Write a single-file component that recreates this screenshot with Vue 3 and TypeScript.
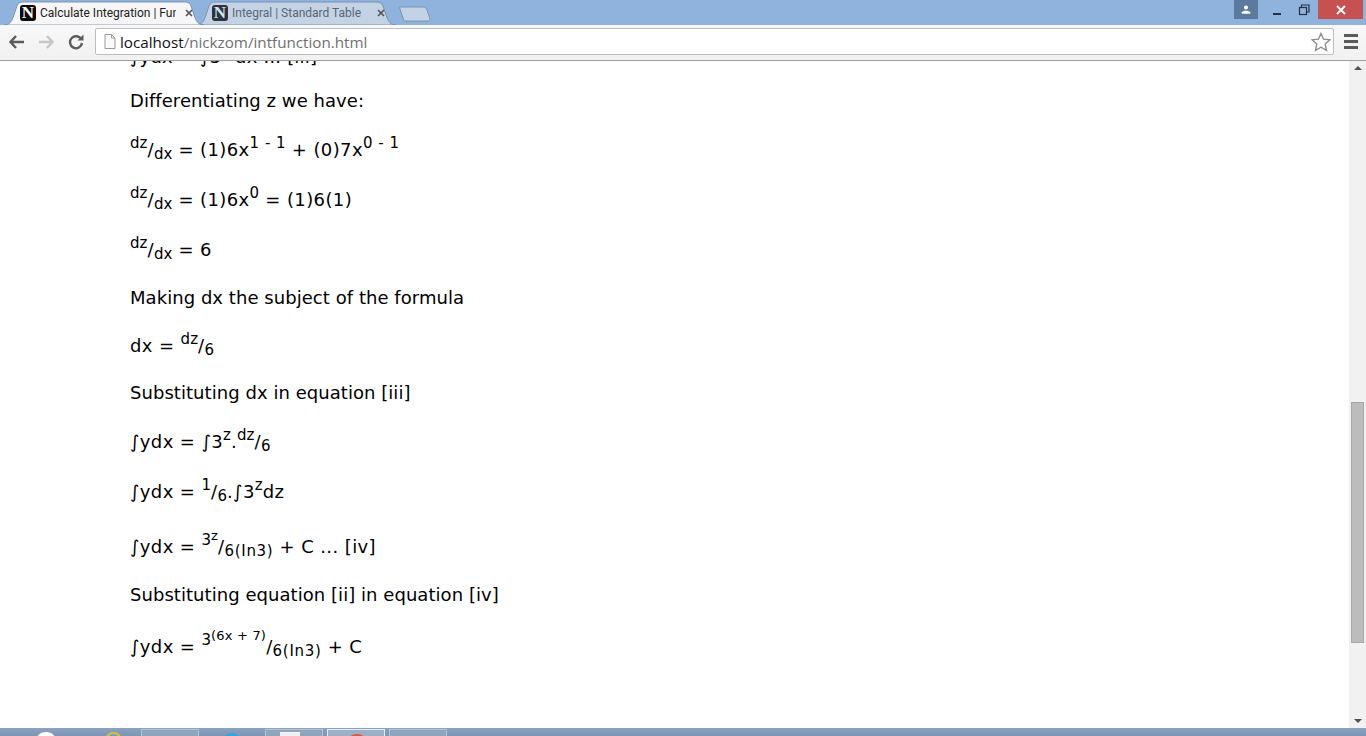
<script setup lang="ts">
const tabs = [
  { title: 'Calculate Integration | Fun', active: true },
  { title: 'Integral | Standard Table', active: false },
]
</script>

<template>
  <div class="window">
    <header class="tabbar">
      <div class="tabs">
        <div v-for="t in tabs" :key="t.title" class="tab" :class="{ active: t.active }">
          <svg class="tab-shape" viewBox="0 0 200 24" preserveAspectRatio="none">
            <path d="M0 24 C6 24 8 20 10 14 L13 5 C14 2 16 1 20 1 L180 1 C184 1 186 2 187 5 L190 14 C192 20 194 24 200 24 Z" />
          </svg>
          <span class="favicon">N</span>
          <span class="tab-title">{{ t.title }}</span>
          <svg class="tab-close" viewBox="0 0 8 8"><path d="M1 1 L7 7 M7 1 L1 7" /></svg>
        </div>
        <svg class="newtab" viewBox="0 0 32 16"><path d="M1 1 L24 1 C26 1 27 2 28 4 L31 13 C31 15 30 15 29 15 L7 15 C5 15 5 14 4 12 L1 3 C0.5 1.5 0.5 1 1 1 Z" /></svg>
      </div>
      <div class="winctl">
        <div class="user">
          <svg viewBox="0 0 12 10" width="10" height="9"><circle cx="6" cy="2.6" r="2.4" /><path d="M1 10 V8.4 C1 7 4 6.4 6 6.4 C8 6.4 11 7 11 8.4 V10 Z" /></svg>
        </div>
        <div class="ctl">
          <svg viewBox="0 0 12 12" width="12" height="12"><rect x="2" y="9" width="8" height="2" /></svg>
        </div>
        <div class="ctl">
          <svg viewBox="0 0 12 12" width="12" height="12" fill="none" stroke="#24303f" stroke-width="1.2"><rect x="1.5" y="3.5" width="7" height="7" /><path d="M3.5 3 V1 H11 V8 H9" /></svg>
        </div>
        <div class="close">
          <svg viewBox="0 0 12 10" width="12" height="10"><path d="M2 1 L10 9 M10 1 L2 9" /></svg>
        </div>
      </div>
    </header>

    <nav class="toolbar">
      <svg class="nav" viewBox="0 0 16 14"><path d="M7 1 L1.5 7 L7 13 M2 7 H15" /></svg>
      <svg class="nav fwd" viewBox="0 0 16 14"><path d="M9 1 L14.5 7 L9 13 M14 7 H1" /></svg>
      <svg class="nav reload" viewBox="0 0 16 16"><path d="M13.4 5.5 A6 6 0 1 0 14 9" /><path class="fill" d="M9.5 6.5 H15.5 V0.5 Z" /></svg>
      <div class="omnibox">
        <svg class="page" viewBox="0 0 12 15"><path d="M1 .5 H7.5 L11 4 V14.5 H1 Z M7.5 .5 V4 H11" /></svg>
        <span class="url"><span class="host">localhost</span>/nickzom/intfunction.html</span>
        <svg class="star" viewBox="0 0 20 20"><path d="M10 1.5 L12.6 7.2 L18.8 7.9 L14.2 12.1 L15.5 18.3 L10 15.2 L4.5 18.3 L5.8 12.1 L1.2 7.9 L7.4 7.2 Z" /></svg>
      </div>
      <div class="menu"><i></i><i></i><i></i></div>
    </nav>

    <div class="viewport">
      <main class="page-content">
        <p class="clipped math">∫ydx = ∫3<sup>z</sup> dx ... [iii]</p>
        <p>Differentiating z we have:</p>
        <p class="math"><sup>dz</sup>/<sub>dx</sub> = (1)6x<sup>1 - 1</sup> + (0)7x<sup>0 - 1</sup></p>
        <p class="math"><sup>dz</sup>/<sub>dx</sub> = (1)6x<sup>0</sup> = (1)6(1)</p>
        <p class="math"><sup>dz</sup>/<sub>dx</sub> = 6</p>
        <p>Making dx the subject of the formula</p>
        <p class="math tight">dx = <sup>dz</sup>/<sub>6</sub></p>
        <p>Substituting dx in equation [iii]</p>
        <p class="math">∫ydx = ∫3<sup>z</sup>.<sup>dz</sup>/<sub>6</sub></p>
        <p class="math">∫ydx = <sup>1</sup>/<sub>6</sub>.∫3<sup>z</sup>dz</p>
        <p class="math">∫ydx = <sup>3<sup>z</sup></sup>/<sub class="log">6(In3)</sub> + C ... [iv]</p>
        <p>Substituting equation [ii] in equation [iv]</p>
        <p class="math last">∫ydx = <sup>3<sup>(6x + 7)</sup></sup>/<sub class="log">6(In3)</sub> + C</p>
      </main>
      <aside class="scrollbar">
        <span class="arrow up"></span>
        <div class="track"><div class="thumb"></div></div>
        <span class="arrow down"></span>
      </aside>
    </div>

    <footer class="taskbar">
      <span class="orb"></span>
      <span class="ie"></span>
      <span class="task"></span>
      <span class="bluedot"></span>
      <span class="task note"><b></b></span>
      <span class="task current"><b></b></span>
      <span class="task"></span>
    </footer>
  </div>
</template>

<style>
html, body { margin: 0; padding: 0; overflow: hidden; }
</style>

<style scoped>
.window { width: 1366px; height: 736px; display: flex; flex-direction: column; overflow: hidden; background: #fff; }

.tabbar { height: 25px; flex: none; display: flex; justify-content: space-between; background: #8fb3dc; }
.tabs { display: flex; align-items: flex-end; padding-left: 4px; }
.tab { position: relative; width: 200px; height: 24px; margin-right: -8px; display: flex; align-items: center; padding: 0 11px 0 16px; box-sizing: border-box; color: #5a6675; font: 12px Roboto, sans-serif; }
.tab-shape { position: absolute; inset: 0; width: 100%; height: 100%; fill: #c3d2e4; stroke: #6f89a8; stroke-width: .8; }
.tab.active { color: #222; z-index: 1; }
.tab.active .tab-shape { fill: #f6f6f6; }
.favicon { position: relative; width: 16px; height: 16px; flex: none; border-radius: 3px; background: #0b0b0b; color: #fff; font: bold 17px/16px "Liberation Serif", serif; text-align: center; }
.tab:not(.active) .favicon { background: #2a3340; color: #d8e0ea; }
.tab-title { position: relative; flex: 1; margin-left: 4px; white-space: nowrap; overflow: hidden; }
.tab-close { position: relative; width: 8px; height: 8px; flex: none; margin-left: 9px; fill: none; stroke: #555; stroke-width: 1.7; }
.tab:not(.active) .tab-close { margin-left: 15px; }
.newtab { width: 32px; height: 16px; margin: 0 0 3px 11px; fill: #c3d2e4; stroke: #6f89a8; stroke-width: .8; }

.winctl { display: flex; height: 19px; padding-right: 3px; }
.user { width: 24px; margin-right: 6px; display: flex; align-items: center; justify-content: center; background: #5b7a9e; fill: #fff; }
.ctl { width: 26px; display: flex; align-items: center; justify-content: center; fill: #24303f; }
.ctl + .ctl { margin-left: 1px; }
.close { width: 45px; margin-left: 1px; display: flex; align-items: center; justify-content: center; background: #c75050; fill: none; stroke: #fff; stroke-width: 2; }

.toolbar { height: 36px; flex: none; box-sizing: border-box; display: flex; align-items: center; padding: 0 8px 2px 9px; border-bottom: 1px solid #a0a0a0; background: linear-gradient(#f8f8f8, #f1f1f1); }
.nav { width: 16px; height: 14px; margin-right: 13px; fill: none; stroke: #5c5c5c; stroke-width: 2.4; flex: none; }
.nav.fwd { stroke: #c6c6c6; margin-right: 14px; }
.nav.reload { height: 16px; margin: 0 8px 0 0; }
.nav.reload .fill { fill: #5c5c5c; stroke: none; }
.omnibox { flex: 1; height: 27px; box-sizing: border-box; margin-left: 3px; display: flex; align-items: center; padding: 0 2px 0 8px; background: #fff; border: 1px solid #bdbdbd; border-radius: 2px; }
.page { width: 12px; height: 15px; fill: #fafafa; stroke: #9a9a9a; flex: none; }
.url { flex: 1; margin-left: 4px; font: 15.2px "Open Sans", sans-serif; color: #6f6f6f; white-space: nowrap; }
.host { color: #111; }
.star { width: 20px; height: 20px; fill: #fff; stroke: #8c8c8c; stroke-width: 1.4; flex: none; }
.menu { width: 14px; margin-left: 10px; display: flex; flex-direction: column; gap: 3px; }
.menu i { height: 3px; background: #5a5a5a; }

.viewport { flex: 1; min-height: 0; display: flex; overflow: hidden; }
.page-content { flex: 1; min-width: 0; padding-left: 130px; overflow: hidden; font: 18px "DejaVu Sans", Verdana, sans-serif; color: #000; letter-spacing: .05px; }
.page-content p { margin: 0 0 26px; line-height: 21.5px; }
.page-content p.math { letter-spacing: .4px; }
.page-content p.clipped { margin: -17px 0 22px; letter-spacing: .2px; }
.page-content p.tight { margin: -2px 0 25px; }
.page-content p.last { margin-top: -3px; }
sup, sub { font-size: 15px; line-height: 13px; letter-spacing: 0; word-spacing: 1px; }
sup { vertical-align: 8px; }
sub { vertical-align: -3px; }
sup sup { font-size: 13px; vertical-align: 5px; word-spacing: 0; letter-spacing: .2px; }
sub.log { letter-spacing: .7px; }

.scrollbar { width: 17px; flex: none; display: flex; flex-direction: column; align-items: center; background: #f1f1f1; }
.track { flex: 1; width: 100%; box-sizing: border-box; padding: 332px 2px 0; }
.thumb { height: 241px; box-sizing: border-box; background: #bcbcbc; border: 1px solid #a8a8a8; }
.arrow { flex: none; width: 0; height: 0; border: 4px solid transparent; }
.arrow.up { margin-top: 5px; border-top: 0; border-bottom: 4px solid #505050; }
.arrow.down { margin-bottom: 5px; border-bottom: 0; border-top: 4px solid #505050; }

.taskbar { height: 8px; flex: none; display: flex; overflow: hidden; background: linear-gradient(#8ba3c0, #7e96b5); }
.orb { width: 22px; height: 22px; margin: 4px 0 0 35px; border-radius: 50%; background: #fff; flex: none; }
.ie { width: 17px; height: 17px; margin: 4px 0 0 48px; box-sizing: border-box; border: 2px solid #e8b92c; border-radius: 50%; background: #5aa6dd; flex: none; }
.task { position: relative; width: 58px; height: 12px; margin: 1px 0 0 19px; box-sizing: border-box; border: 1px solid #b7c4d4; background: #8fa4bd; flex: none; }
.bluedot { width: 20px; height: 20px; margin: 5px 0 0 23px; border-radius: 50%; background: #35a4e0; flex: none; }
.task.note { margin-left: 23px; }
.task.note b { position: absolute; left: 14px; top: 2px; width: 20px; height: 10px; background: #f2f2f2; }
.task.current { margin-left: 4px; background: #9db0c6; border-color: #e6ecf3; }
.task.current b { position: absolute; left: 17px; top: 4px; width: 24px; height: 24px; border-radius: 50%; background: #e0533f; }
.task.current + .task { margin-left: 4px; }
</style>
